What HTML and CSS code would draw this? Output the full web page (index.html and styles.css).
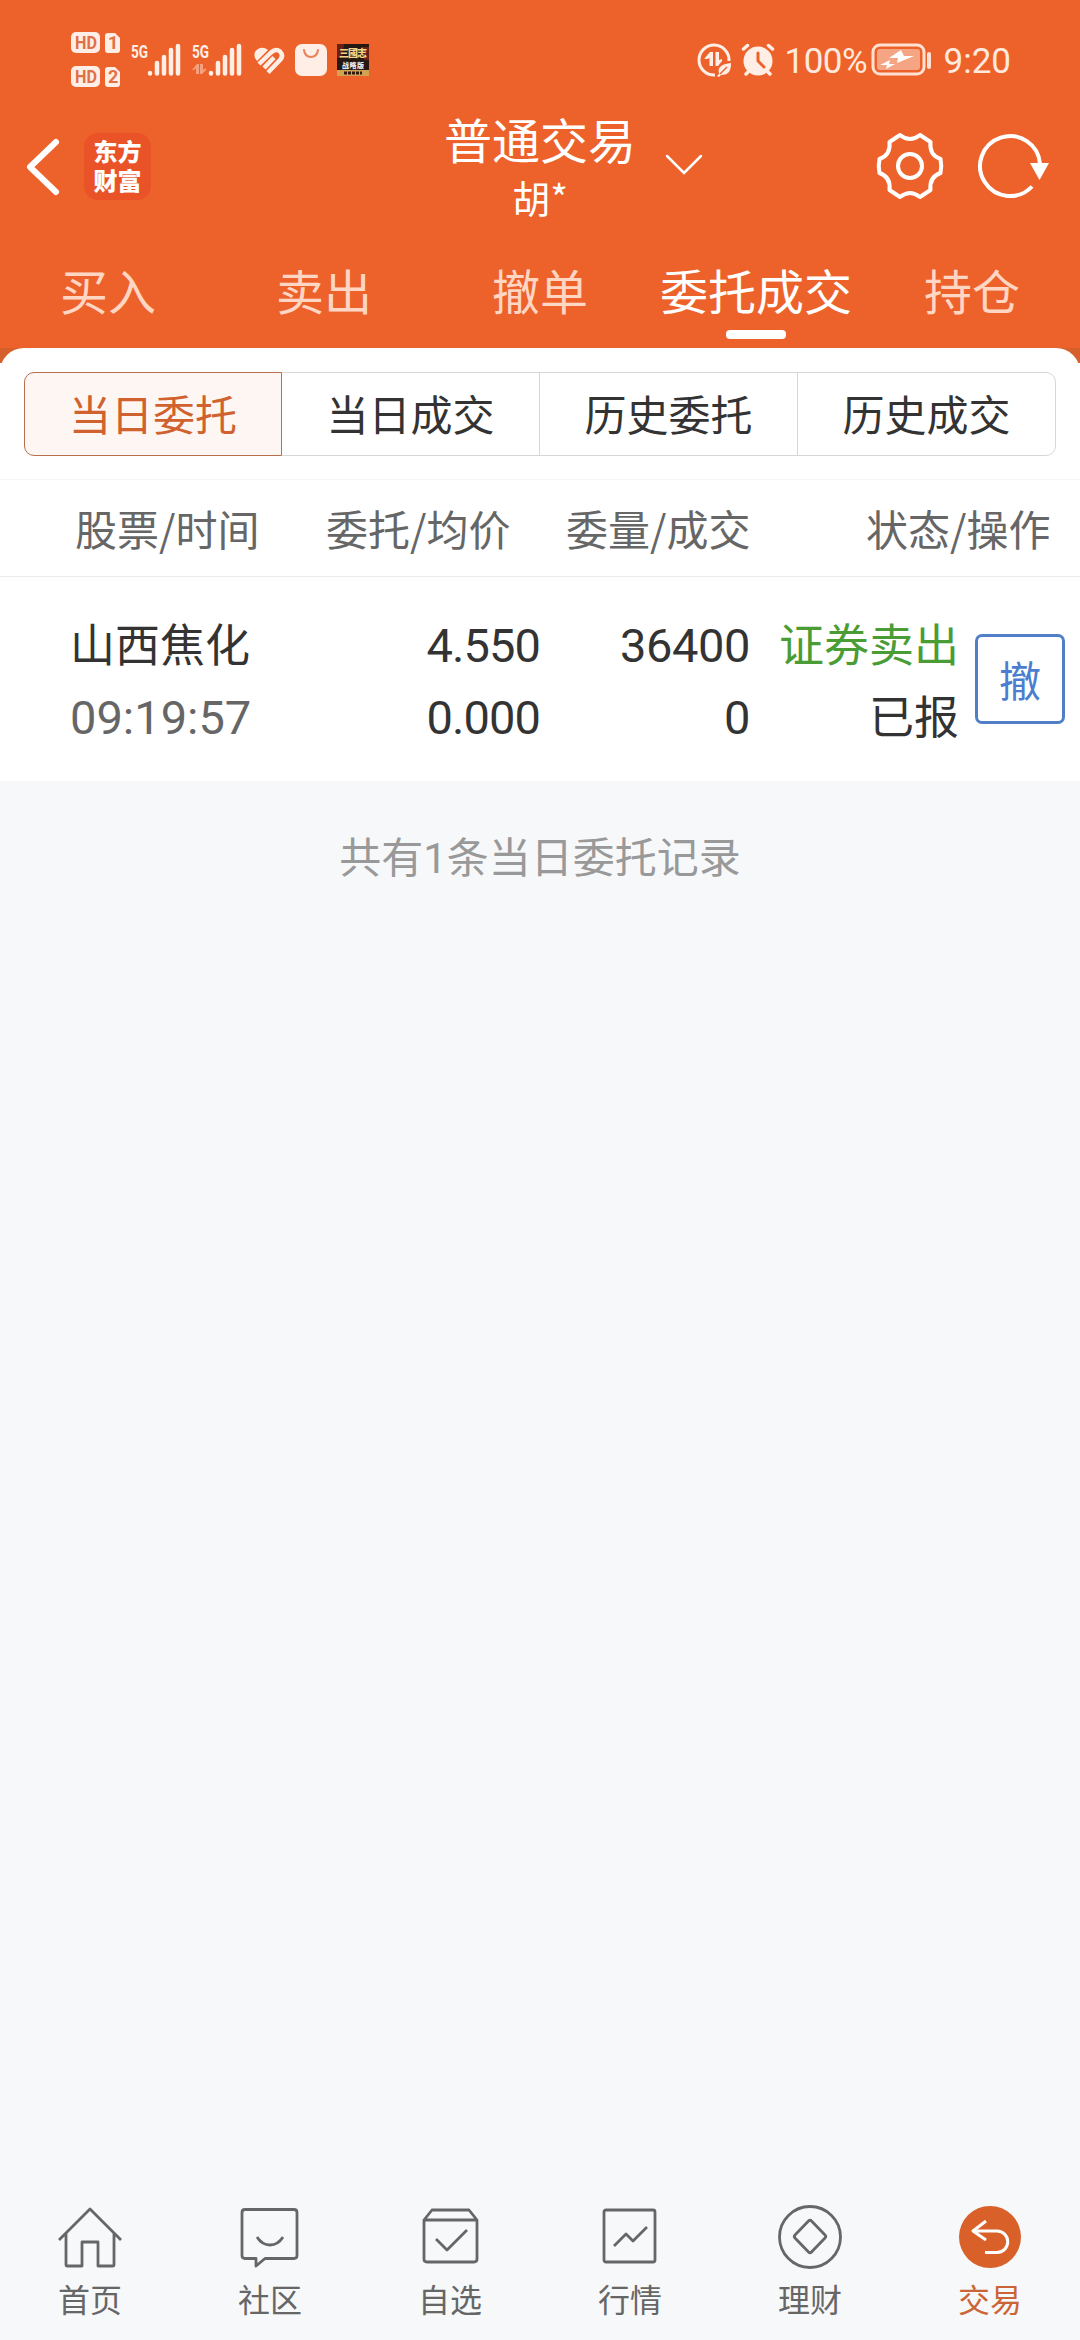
FILE: index.html
```html
<!DOCTYPE html>
<html lang="zh-CN">
<head>
    <meta charset="UTF-8">
    <meta name="viewport" content="width=device-width, initial-scale=1.0">
    <title>普通交易</title>
    <link rel="stylesheet" href="styles.css">
</head>
<body>
    <header class="header">
        <div class="status-bar">
            <div class="status-left">
                <svg class="hd" width="50" height="56" viewBox="0 0 50 56">
                    <g fill="#ffeee6">
                        <rect x="0" y="0" width="29" height="21" rx="5"/>
                        <path d="M37 1h7l5 5v12q0 3-3 3h-9q-3 0-3-3V4q0-3 3-3z"/>
                        <rect x="0" y="34" width="29" height="21" rx="5"/>
                        <path d="M37 35h7l5 5v12q0 3-3 3h-9q-3 0-3-3V38q0-3 3-3z"/>
                    </g>
                    <g class="hd-text">
                        <text x="4" y="17" textLength="22" lengthAdjust="spacingAndGlyphs">HD</text>
                        <text x="37" y="17">1</text>
                        <text x="4" y="51" textLength="22" lengthAdjust="spacingAndGlyphs">HD</text>
                        <text x="37" y="51">2</text>
                    </g>
                </svg>
                <svg class="signal" width="50" height="34" viewBox="0 0 50 34">
                    <text x="0" y="16" textLength="17" lengthAdjust="spacingAndGlyphs">5G</text>
                    <path d="M19 31v.5M26 21v10.500M33 15v16.500M40 8v23.500M47 4v27.500"/>
                </svg>
                <svg class="signal" width="50" height="34" viewBox="0 0 50 34">
                    <text x="0" y="16" textLength="17" lengthAdjust="spacingAndGlyphs">5G</text>
                    <path d="M19 31v.5M26 21v10.500M33 15v16.500M40 8v23.500M47 4v27.500"/>
                    <g fill="#f7a27f"><path d="M0 28l5-6h2v10H4v-6l-2 2zM8 22h3v6l3-2v2l-4 4H8z"/></g>
                </svg>
                <svg class="health" width="32" height="28" viewBox="0 0 32 28">
                    <path d="M1 11Q-1 5 4 2t10 1L3 14z" fill="#ffeee6"/>
                    <g fill="none" stroke="#ffeee6" stroke-width="4.500" stroke-linejoin="round">
                        <path d="M5 17L17 5.500Q22 1 26 4.500q4 4 0 8.500L14 25.500"/>
                        <path d="M10 21l10-10.500"/>
                    </g>
                </svg>
                <svg class="bag" width="32" height="32" viewBox="0 0 32 32">
                    <rect width="32" height="32" rx="7" fill="#ffeee6"/>
                    <path d="M9 6q1 7 7 7t7-7" fill="none" stroke="#e9835b" stroke-width="2" stroke-linecap="round"/>
                </svg>
                <svg class="game" width="32" height="32" viewBox="0 0 32 32">
                    <rect width="32" height="32" fill="#251711"/>
                    <path d="M0 0h7l-2 14H0zM26 3h6v13h-5z" fill="#672116"/>
                    <rect y="26" width="32" height="6" fill="#d2a252"/>
                    <text x="2" y="13" font-size="10" textLength="28" fill="#f3d489">三國志</text>
                    <text x="5" y="24" font-size="7" textLength="22" fill="#ececec">战略版</text>
                    <path d="M7 29h18" stroke="#32190e" stroke-width="3" stroke-dasharray="3 1"/>
                </svg>
            </div>
            <div class="status-right">
                <svg width="34" height="34" viewBox="0 0 34 34">
                    <path d="M18 32A15 15 0 1 1 32 18" fill="none" stroke="#ffeee6" stroke-width="3"/>
                    <path d="M7 16l6-7h3v14h-3.500v-8l-2 1zM18.500 9H22v8l3-1v2l-4 5h-2.500z" fill="#ffeee6"/>
                    <path d="M34 20c-8 1-14 3-12 11l-2 2 2 1 2-2c8 0 10-4 10-12z" fill="#ffeee6"/>
                    <path d="M23 31l7-7" stroke="#ed622b" stroke-width="1.500"/>
                </svg>
                <svg class="alarm" width="34" height="34" viewBox="0 0 34 34">
                    <circle cx="17" cy="18" r="14.500" fill="#ffeee6"/>
                    <path d="M2.500 6l4-3.500M27.500 2.500l4 3.500M7 29l-2 2M27 29l2 2" stroke="#ffeee6" stroke-width="3.500" stroke-linecap="round"/>
                    <path d="M17 10v8l6 6" fill="none" stroke="#ed622b" stroke-width="3" stroke-linecap="round"/>
                </svg>
                <span class="battery-text">100%</span>
                <svg width="61" height="34" viewBox="0 0 61 34">
                    <rect x="2" y="2" width="51" height="29" rx="7" fill="none" stroke="#ffe1d3" stroke-width="3"/>
                    <rect x="6" y="6" width="43" height="21" rx="3" fill="#f5a584"/>
                    <path d="M30 7L18 15h9l-1 5 17-7H33zM19 17L9 22h7l-1 4 9-5h-6z" fill="#fff"/>
                    <path d="M58 11v13" stroke="#ffe1d3" stroke-width="4" stroke-linecap="round"/>
                </svg>
                <span class="clock">9:20</span>
            </div>
        </div>

        <div class="title-bar">
            <div class="title-left">
                <svg width="34" height="58" viewBox="0 0 34 58">
                    <path d="M31 4L5 29l26 25" fill="none" stroke="#fff" stroke-width="6" stroke-linecap="round" stroke-linejoin="round"/>
                </svg>
                <div class="logo"><span>东方</span><span>财富</span></div>
            </div>
            <div class="title-center">
                <div class="title">普通交易</div>
                <div class="user">胡*</div>
            </div>
            <div class="title-right">
                <svg class="arrow-down" width="38" height="22" viewBox="0 0 38 22">
                    <path d="M2 2l17 17L36 2" fill="none" stroke="#fff" stroke-width="2.500" stroke-linecap="round"/>
                </svg>
                <svg class="gear" width="68" height="68" viewBox="0 0 68 68">
                    <path d="M24 3Q34 11 44 3L54.500 10Q53 23 64.500 27Q66 34 64.500 41Q53 45 54.500 58L44 65Q34 57 24 65L13.500 58Q15 45 3.500 41Q2 34 3.500 27Q15 23 13.500 10Z" fill="none" stroke="#fff" stroke-width="4" stroke-linejoin="round"/>
                    <circle cx="34" cy="34" r="12" fill="none" stroke="#fff" stroke-width="4"/>
                </svg>
                <svg class="refresh" width="72" height="68" viewBox="0 0 72 68">
                    <path d="M54 54.500A30 30 0 1 1 62 32" fill="none" stroke="#fff" stroke-width="4"/>
                    <path d="M52 31h19L61.500 48z" fill="#fff"/>
                </svg>
            </div>
        </div>

        <nav class="tabs">
            <a class="tab">买入</a>
            <a class="tab">卖出</a>
            <a class="tab">撤单</a>
            <a class="tab active">委托成交</a>
            <a class="tab">持仓</a>
        </nav>
    </header>

    <main>
        <div class="sheet-bg">
            <div class="sheet">
                <div class="segments">
                    <div class="segment selected">当日委托</div>
                    <div class="segment">当日成交</div>
                    <div class="segment">历史委托</div>
                    <div class="segment">历史成交</div>
                </div>
                <div class="table-head">
                    <span>股票/时间</span>
                    <span>委托/均价</span>
                    <span>委量/成交</span>
                    <span>状态/操作</span>
                </div>
                <div class="order">
                    <div class="cell stock"><span>山西焦化</span><span class="num time">09:19:57</span></div>
                    <div class="cell"><span class="num price">4.550</span><span class="num price">0.000</span></div>
                    <div class="cell"><span class="num">36400</span><span class="num">0</span></div>
                    <div class="cell"><span class="sell">证券卖出</span><span>已报</span></div>
                    <button class="cancel">撤</button>
                </div>
            </div>
        </div>
        <p class="summary">共有<span class="one">1</span>条当日委托记录</p>
    </main>

    <nav class="bottom-nav">
        <a class="nav-item">
            <svg width="68" height="68" viewBox="0 0 68 68">
                <path d="M3 37L34 6l31 31M10 30v32q0 1 1 1h15V39h16v24h15q1 0 1-1V30"/>
            </svg>
            <span>首页</span>
        </a>
        <a class="nav-item">
            <svg width="68" height="68" viewBox="0 0 68 68">
                <path d="M9 6.500h49q3 0 3 3v43q0 3-3 3H29l-9 7.500v-7.500H9q-3 0-3-3v-43q0-3 3-3zM21 34q5 8 13 8t13-8"/>
            </svg>
            <span>社区</span>
        </a>
        <a class="nav-item">
            <svg width="68" height="68" viewBox="0 0 68 68">
                <path d="M8 17l8-10h37l8 10v39q0 3-3 3H11q-3 0-3-3zM8 17h53M20 36l11 11 20-20"/>
            </svg>
            <span>自选</span>
        </a>
        <a class="nav-item">
            <svg width="68" height="68" viewBox="0 0 68 68">
                <rect x="8" y="7" width="51" height="52" rx="2"/>
                <path d="M18 43l12-12 7 7 14-14"/>
            </svg>
            <span>行情</span>
        </a>
        <a class="nav-item">
            <svg width="68" height="68" viewBox="0 0 68 68">
                <circle cx="34" cy="34" r="30.500"/>
                <path d="M32.500 18q1.500-1.500 3 0L49 32q1.500 1.500 0 3L35.500 49q-1.500 1.500-3 0L19 35q-1.500-1.500 0-3z"/>
            </svg>
            <span>理财</span>
        </a>
        <a class="nav-item current">
            <svg width="68" height="68" viewBox="0 0 68 68">
                <circle class="disc" cx="34" cy="34" r="31"/>
                <path class="back" d="M30 18L17 28l13 9M17 28h24a10.700 10.700 0 0 1 0 21.500H29"/>
            </svg>
            <span>交易</span>
        </a>
    </nav>
</body>
</html>
```

FILE: styles.css
```css
* {
    box-sizing: border-box;
}

body {
    margin: 0;
    width: 1080px;
    height: 2340px;
    display: flex;
    flex-direction: column;
    background-color: #f7f8fa;
    font-family: "Noto Sans CJK SC", sans-serif;
    color: #333333;
    overflow: hidden;
}

svg {
    display: block;
    flex-shrink: 0;
    overflow: visible;
}

/* header */
.header {
    height: 348px;
    background-color: #ed622b;
    color: #ffffff;
}

.status-bar {
    height: 118px;
    padding: 0 69px 0 71px;
    display: flex;
    justify-content: space-between;
}

.status-left {
    display: flex;
    padding-top: 32px;
}

.hd-text {
    font-family: Roboto, sans-serif;
    font-size: 18px;
    font-weight: 700;
    fill: #df7145;
}

.signal {
    margin: 10px 0 0 10px;
    fill: #ffeee6;
}

.signal + .signal {
    margin-left: 11px;
}

.signal text {
    font-family: Roboto, sans-serif;
    font-size: 19px;
    font-weight: 700;
}

.signal > path {
    stroke: #ffeee6;
    stroke-width: 4.5;
    stroke-linecap: round;
}

.health {
    margin: 15px 0 0 12px;
}

.bag {
    margin: 12px 0 0 9px;
}

.game {
    margin: 12px 0 0 10px;
    font-weight: 900;
}

.status-right {
    display: flex;
    padding-top: 43px;
    font-family: Roboto, sans-serif;
    font-size: 35px;
    line-height: 37px;
    color: #ffe9de;
}

.alarm {
    margin-left: 10px;
}

.battery-text {
    width: 86px;
    margin-left: 10px;
    letter-spacing: -0.5px;
}

.clock {
    margin-left: 12px;
}

.title-bar {
    height: 118px;
    display: grid;
    grid-template-columns: 438px 204px 438px;
}

.title-left {
    display: flex;
    padding: 20px 0 0 25px;
}

.logo {
    width: 67px;
    height: 67px;
    margin: -5px 0 0 25px;
    padding-top: 3px;
    border-radius: 14px;
    background-color: #ea5328;
    display: flex;
    flex-direction: column;
    align-items: center;
    font-size: 24px;
    font-weight: 900;
    line-height: 29px;
}

.title-center {
    text-align: center;
}

.title {
    margin-top: -4px;
    font-size: 48px;
    line-height: 48px;
    white-space: nowrap;
}

.user {
    font-size: 38px;
    line-height: 38px;
    margin-top: 16px;
}

.title-right {
    display: flex;
    padding: 14px 0 0 23px;
}

.arrow-down {
    margin-top: 22px;
}

.gear {
    margin-left: 173px;
}

.refresh {
    margin-left: 34px;
}

.tabs {
    height: 112px;
    display: grid;
    grid-template-columns: repeat(5, 216px);
}

.tab {
    display: flex;
    flex-direction: column;
    align-items: center;
    padding-top: 29px;
    font-size: 48px;
    line-height: 48px;
    color: #ffd6c3;
}

.tab.active {
    color: #ffffff;
}

.tab.active::after {
    content: "";
    width: 60px;
    height: 9px;
    margin-top: 17px;
    border-radius: 4px;
    background-color: #ffffff;
}

/* sheet */
.sheet-bg {
    background: linear-gradient(#d6602c 15px, #ffffff 15px);
}

.sheet {
    height: 433px;
    padding-top: 24px;
    border-radius: 24px 24px 0 0;
    background-color: #ffffff;
}

.segments {
    height: 84px;
    margin: 0 24px;
    display: grid;
    grid-template-columns: repeat(4, 1fr);
}

.segment {
    border: 1px solid #d5d7d8;
    margin-left: -1px;
    font-size: 42px;
    line-height: 80px;
    text-align: center;
}

.segment:first-child {
    margin-left: 0;
    border-radius: 10px 0 0 10px;
}

.segment:last-child {
    border-radius: 0 10px 10px 0;
}

.segment.selected {
    z-index: 1;
    border-color: #b8704b;
    background-color: #fdf6f2;
    color: #d0622f;
}

.table-head {
    height: 98px;
    margin-top: 23px;
    padding: 0 31px 0 75px;
    border-top: 1px solid #f5f5f5;
    border-bottom: 1px solid #ebebeb;
    display: grid;
    grid-template-columns: 251px 240px 300px 183px;
    font-size: 42px;
    line-height: 95px;
    color: #666666;
    white-space: nowrap;
}

.order {
    height: 204px;
    padding: 0 15px 0 70px;
    display: grid;
    grid-template-columns: 178px 292px 210px 209px 90px;
    font-size: 45px;
    line-height: 72px;
}

.order .cancel {
    margin-left: 16px;
}

.cell {
    padding-top: 30px;
    display: flex;
    flex-direction: column;
    align-items: flex-end;
    white-space: nowrap;
}

.stock {
    align-items: flex-start;
}

.num {
    padding-top: 3px;
    margin-bottom: -3px;
    font-family: Roboto, sans-serif;
    font-size: 47px;
    letter-spacing: -0.4px;
}

.price {
    letter-spacing: -0.9px;
}

.time {
    letter-spacing: 0;
    color: #666666;
}

.sell {
    color: #4a9c35;
}

.cancel {
    width: 90px;
    height: 90px;
    margin-top: 57px;
    padding: 0;
    border: 3px solid #507fc8;
    border-radius: 7px;
    background-color: #ffffff;
    font-family: inherit;
    font-size: 42px;
    line-height: 80px;
    color: #4b7ecf;
}

.summary {
    margin: 42px 0 0;
    font-size: 42px;
    line-height: 64px;
    text-align: center;
    color: #999999;
}

.one {
    font-family: Roboto, sans-serif;
}

/* bottom navigation */
.bottom-nav {
    height: 168px;
    margin-top: auto;
    display: grid;
    grid-template-columns: repeat(6, 180px);
}

.nav-item {
    display: flex;
    flex-direction: column;
    align-items: center;
    padding-top: 31px;
    font-size: 32px;
    line-height: 48px;
    color: #666666;
}

.nav-item span {
    margin-top: 3px;
}

.nav-item svg {
    fill: none;
    stroke: #666666;
    stroke-width: 2.8;
    stroke-linejoin: round;
}

.nav-item.current {
    color: #cb6536;
}

.nav-item .disc {
    fill: #d96028;
    stroke: none;
}

.nav-item .back {
    stroke: #ffffff;
    stroke-width: 3;
}
```
